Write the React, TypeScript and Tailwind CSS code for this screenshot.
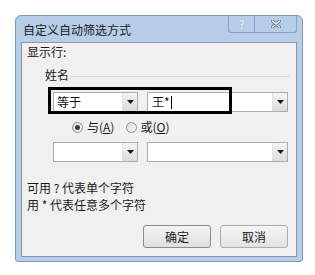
import React from "react";

const Combo: React.FC<{ w: string; text?: React.ReactNode }> = ({ w, text }) => {
  return (
    <div className={`${w} h-[20px] flex border border-[#abadb3] bg-white`}>
      <div className="flex-1 flex items-center pl-[1px] text-[12px] leading-none text-[#111]">{text}</div>
      <div className="w-[15px] h-full flex items-center justify-center bg-gradient-to-b from-[#f4f4f4] to-[#dcdcdc] border-l border-[#e2e2e2]">
        <svg width="7" height="4" viewBox="0 0 7 4">
          <path d="M0 0h7L3.5 4z" fill="#1a1a1a" />
        </svg>
      </div>
    </div>
  );
};

const Radio: React.FC<{ checked?: boolean }> = ({ checked }) => (
  <span className="w-[11px] h-[11px] rounded-full border border-[#8e8f8f] bg-gradient-to-br from-[#dcdcdc] to-[#fbfbfb] flex items-center justify-center">
    {checked && <span className="w-[5px] h-[5px] rounded-full bg-[#2f3a4a]" />}
  </span>
);

const App: React.FC = () => {
  return (
    <div className="w-[315px] h-[275px] bg-white pt-[15px] pl-[15px] font-['Noto_Sans_CJK_SC',sans-serif]">
      <div className="w-[288px] h-[247px] flex flex-col border border-[#7f98b9] rounded-t-[6px] rounded-b-[3px] bg-[#b7cee9] px-[5px] pb-[4px]">
        {/* Title bar */}
        <div className="h-[26px] flex items-start justify-between">
          <span className="mt-[7px] pl-[2px] text-[12px] leading-[14px] text-[#1b1b1b]">自定义自动筛选方式</span>
          <div className="flex">
            <div className="w-[26px] h-[17px] flex items-center justify-center border-l border-b border-[#8aa3c4] rounded-bl-[3px] text-[11px] leading-none font-bold text-[#eef3fa] [text-shadow:0_0_1px_#6a7f9c]">
              ?
            </div>
            <div className="w-[43px] h-[17px] flex items-center justify-center border-l border-r border-b border-[#8aa3c4] rounded-br-[3px]">
              <svg width="10" height="8" viewBox="0 0 10 8">
                <path d="M1.5 1l7 6M8.5 1l-7 6" stroke="#5d6f88" strokeWidth="3" strokeLinecap="round" />
                <path d="M1.5 1l7 6M8.5 1l-7 6" stroke="#f4f7fb" strokeWidth="1.6" strokeLinecap="round" />
              </svg>
            </div>
          </div>
        </div>

        {/* Content */}
        <div className="relative flex-1 flex flex-col border border-[#8597b1] bg-[#f0f0f0] text-[12px] text-[#1a1a1a]">
          <div className="mt-[1px] pl-[5px] leading-[16px]">显示行:</div>
          <div className="mt-[7px] pl-[23px] pr-[6px] flex items-center leading-[16px]">
            <span>姓名</span>
            <div className="flex-1 h-px bg-[#dcdcdc] mt-[2px] ml-[1px]" />
          </div>

          <div className="mt-[9px] pl-[31px] flex gap-[9px]">
            <Combo w="w-[85px]" text={<span className="pl-[2px]">等于</span>} />
            <Combo
              w="w-[141px]"
              text={
                <span className="pl-[3px] flex items-center">
                  王*<span className="ml-[1px] w-px h-[13px] bg-black" />
                </span>
              }
            />
          </div>

          <div className="mt-[7px] pl-[50px] h-[16px] flex items-center">
            <Radio checked />
            <span className="ml-[4px] leading-[16px]">
              与(<span className="underline">A</span>)
            </span>
            <span className="ml-[12px]">
              <Radio />
            </span>
            <span className="ml-[3px] leading-[16px]">
              或(<span className="underline">O</span>)
            </span>
          </div>

          <div className="mt-[7px] pl-[31px] flex gap-[9px]">
            <Combo w="w-[85px]" />
            <Combo w="w-[141px]" />
          </div>

          <div className="mt-[18px] pl-[5px] leading-[16px]">可用 ? 代表单个字符</div>
          <div className="mt-[1px] pl-[5px] leading-[16px]">用 * 代表任意多个字符</div>

          <div className="mt-[12px] pr-[8px] flex justify-end gap-[9px]">
            <button className="w-[68px] h-[23px] rounded-[3px] border border-[#8c8c8c] bg-gradient-to-b from-[#f5f5f5] to-[#dedede] text-[12px] text-[#1a1a1a]">
              确定
            </button>
            <button className="w-[68px] h-[23px] rounded-[3px] border border-[#acacac] bg-gradient-to-b from-[#f5f5f5] to-[#e2e2e2] text-[12px] text-[#1a1a1a]">
              取消
            </button>
          </div>

          {/* highlight frame drawn over the first condition */}
          <div className="absolute left-[26px] top-[44px] w-[184px] h-[27px] border-[3px] border-black" />
        </div>
      </div>
    </div>
  );
};

export default App;
